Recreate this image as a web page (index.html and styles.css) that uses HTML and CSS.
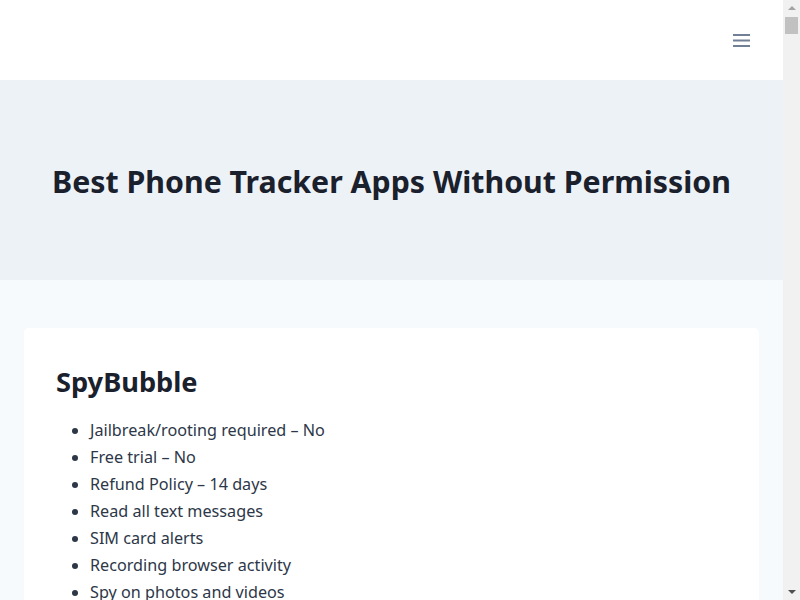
FILE: index.html
```html
<!DOCTYPE html>
<html lang="en">
<head>
  <meta charset="UTF-8">
  <title>Best Phone Tracker Apps Without Permission</title>
  <link rel="stylesheet" href="styles.css">
</head>
<body>

  <header class="site-header">
    <button class="menu-toggle" aria-label="Menu">
      <svg width="17" height="14" viewBox="0 0 17 14">
        <rect x="0" y="1" width="17" height="2" fill="#718096"/>
        <rect x="0" y="6.5" width="17" height="2" fill="#718096"/>
        <rect x="0" y="12" width="17" height="2" fill="#718096"/>
      </svg>
    </button>
  </header>

  <section class="hero">
    <h1>Best Phone Tracker Apps Without Permission</h1>
  </section>

  <main class="content">
    <article class="card">
      <h2>SpyBubble</h2>
      <ul class="features">
        <li>Jailbreak/rooting required – No</li>
        <li>Free trial – No</li>
        <li>Refund Policy – 14 days</li>
        <li>Read all text messages</li>
        <li>SIM card alerts</li>
        <li>Recording browser activity</li>
        <li>Spy on photos and videos</li>
        <li>Track GPS location</li>
        <li>Monitor social media apps</li>
        <li>Call logs and contacts</li>
      </ul>
    </article>
  </main>

  <!-- window scrollbar, the page is longer than the viewport -->
  <div class="scrollbar">
    <span class="arrow up"></span>
    <span class="thumb"></span>
    <span class="arrow down"></span>
  </div>

</body>
</html>
```

FILE: styles.css
```css
body {
  font-family: 'Noto Sans', 'Open Sans', sans-serif;
  margin: 0 17px 0 0;
  background: #f7fafc;
  color: #1a202c;
}

.site-header {
  height: 80px;
  background: #fff;
  display: flex;
  justify-content: flex-end;
  align-items: center;
  padding: 0 33px;
}

.menu-toggle {
  border: none;
  background: none;
  padding: 0;
  display: flex;
  cursor: pointer;
}

.hero {
  background: #edf2f7;
  height: 200px;
  display: flex;
  align-items: center;
  justify-content: center;
  padding-top: 2px;
  box-sizing: border-box;
}

.hero h1 {
  margin: 0;
  font-size: 30.3px;
  font-weight: 700;
  color: #1a202c;
  text-align: center;
}

.content {
  padding: 48px 24px;
}

.card {
  background: #fff;
  border-radius: 5px;
  padding: 32px;
}

.card h2 {
  margin: 2px 0 14px;
  font-size: 27.2px;
  font-weight: 700;
  line-height: 1.5;
}

.features {
  margin: 0;
  padding-left: 34px;
  color: #2d3748;
  font-size: 16.2px;
  line-height: 27px;
}

.scrollbar {
  position: fixed;
  top: 0;
  right: 0;
  width: 17px;
  height: 100vh;
  background: #f1f1f1;
}

.thumb {
  position: absolute;
  top: 17px;
  left: 2px;
  width: 13px;
  height: 17px;
  background: #c1c1c1;
}

.arrow {
  position: absolute;
  left: 5px;
  width: 0;
  height: 0;
  border-left: 4px solid transparent;
  border-right: 4px solid transparent;
}

.arrow.up {
  top: 6px;
  border-bottom: 4px solid #a3a3a3;
}

.arrow.down {
  bottom: 6px;
  border-top: 4px solid #505050;
}
```
